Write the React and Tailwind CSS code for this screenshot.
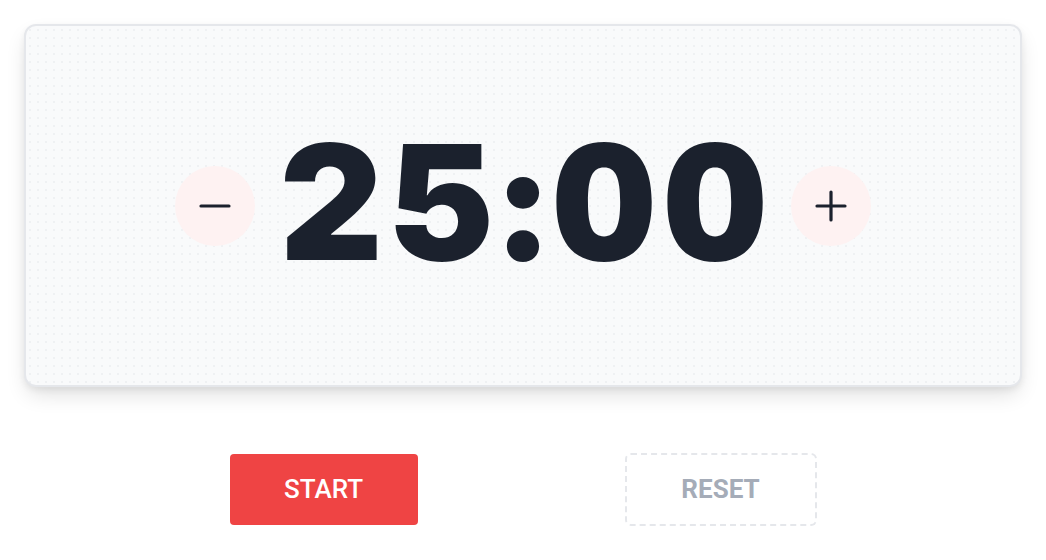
export default function App() {
  return (
    <div className="min-h-screen bg-white px-6 pt-6" style={{ fontFamily: "Inter, 'Noto Sans', sans-serif" }}>
      <div className="h-[363px] rounded-xl border-2 border-gray-200 bg-[#f9fafb] bg-[radial-gradient(#eff1f3_1px,transparent_1px)] bg-[size:8px_8px] shadow-[0_10px_22px_-4px_rgba(0,0,0,0.14),0_3px_6px_rgba(0,0,0,0.06)] flex items-center justify-center gap-6">
        <button className="w-20 h-20 rounded-full bg-[#fef2f2] flex items-center justify-center">
          <svg width="34" height="34" viewBox="0 0 34 34" fill="none" stroke="#1b212d" strokeWidth="3.2" strokeLinecap="round">
            <path d="M3 17h28" />
          </svg>
        </button>
        <div className="text-[160px] leading-none font-black text-[#1b212d] tracking-[8px] -mr-[8px] tabular-nums -mt-2">
          25:00
        </div>
        <button className="w-20 h-20 rounded-full bg-[#fef2f2] flex items-center justify-center">
          <svg width="32" height="32" viewBox="0 0 32 32" fill="none" stroke="#1b212d" strokeWidth="3.2" strokeLinecap="round">
            <path d="M2 16h28M16 2v28" />
          </svg>
        </button>
      </div>

      <div className="mt-[67px] flex justify-center gap-[207px]" style={{ fontFamily: "Roboto, sans-serif" }}>
        <button className="w-[188px] h-[71px] rounded bg-[#ef4444] text-white text-[26px] font-medium">
          START
        </button>
        <button className="w-[192px] h-[73px] -mt-px rounded-md border-2 border-dashed border-gray-200 text-[#a5acb8] text-[26px] font-bold">
          RESET
        </button>
      </div>
    </div>
  );
}
